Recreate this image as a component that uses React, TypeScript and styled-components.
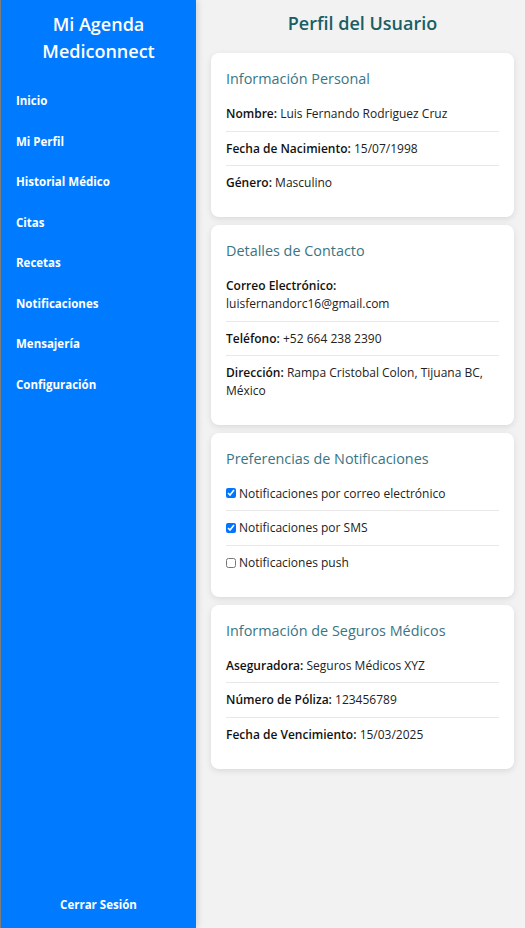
import styled, { createGlobalStyle } from "styled-components";

const GlobalStyle = createGlobalStyle`
  html, body {
    margin: 0;
    padding: 0;
  }
  body {
    font-family: "Open Sans", "Noto Sans", sans-serif;
    background: #f2f2f2;
    color: #222;
  }
  * {
    box-sizing: border-box;
  }
`;

const Layout = styled.div`
  display: flex;
  height: 928px;
`;

const Sidebar = styled.aside`
  width: 196px;
  flex-shrink: 0;
  background: #007bff;
  border-left: 1px solid #7d7d7d;
  color: #fff;
  display: flex;
  flex-direction: column;
  box-shadow: 2px 0 6px rgba(0, 0, 0, 0.12);
  position: relative;
  z-index: 1;
`;

const Brand = styled.h1`
  margin: 11px 0 16px;
  font-size: 18px;
  font-weight: 600;
  line-height: 27px;
  text-align: center;
`;

const NavList = styled.ul`
  list-style: none;
  margin: 0;
  padding: 0;
`;

const NavItem = styled.li`
  padding: 11px 15px;
  font-size: 11.5px;
  font-weight: 700;
  line-height: 18.5px;
  cursor: pointer;
`;

const Logout = styled.div`
  margin-top: auto;
  padding: 16px 15px 14px;
  font-size: 11.5px;
  font-weight: 700;
  line-height: 18px;
  text-align: center;
  cursor: pointer;
`;

const Main = styled.main`
  flex: 1;
  padding: 10px 11px 15px 15px;
  overflow: auto;
`;

const PageTitle = styled.h2`
  margin: 0 0 16px;
  font-size: 18px;
  font-weight: 600;
  line-height: 27px;
  color: #1a5e63;
  text-align: center;
`;

const Card = styled.section`
  background: #fff;
  border-radius: 8px;
  padding: 15px 15px 17px;
  margin-bottom: 8px;
  box-shadow: 0 2px 6px rgba(0, 0, 0, 0.1);
`;

const CardTitle = styled.h3`
  margin: 0 0 7px;
  font-size: 14.4px;
  font-weight: 400;
  line-height: 22px;
  color: #3a7584;
`;

const Row = styled.div`
  padding: 8px 0;
  font-size: 12px;
  line-height: 17.7px;
  border-bottom: 1px solid #e8e8e8;

  &:last-child {
    border-bottom: none;
  }
`;

const Label = styled.strong`
  font-weight: 600;
  color: #111;
`;

const CheckRow = styled.label`
  display: flex;
  align-items: center;
  padding: 8px 0;
  font-size: 12px;
  line-height: 17.7px;
  border-bottom: 1px solid #e8e8e8;

  &:last-child {
    border-bottom: none;
  }
`;

const Check = styled.input`
  width: 10px;
  height: 10px;
  margin: 0 3px 0 0;
`;

const navItems = [
  "Inicio",
  "Mi Perfil",
  "Historial Médico",
  "Citas",
  "Recetas",
  "Notificaciones",
  "Mensajería",
  "Configuración",
];

type TField = { label: string; value: string };

const InfoCard = ({ title, fields }: { title: string; fields: TField[] }) => (
  <Card>
    <CardTitle>{title}</CardTitle>
    {fields.map((f) => (
      <Row key={f.label}>
        <Label>{f.label}:</Label> {f.value}
      </Row>
    ))}
  </Card>
);

const App = () => {
  return (
    <>
      <GlobalStyle />
      <Layout>
        <Sidebar>
          <Brand>
            Mi Agenda
            <br />
            Mediconnect
          </Brand>
          <NavList>
            {navItems.map((item) => (
              <NavItem key={item}>{item}</NavItem>
            ))}
          </NavList>
          <Logout>Cerrar Sesión</Logout>
        </Sidebar>
        <Main>
          <PageTitle>Perfil del Usuario</PageTitle>
          <InfoCard
            title="Información Personal"
            fields={[
              { label: "Nombre", value: "Luis Fernando Rodriguez Cruz" },
              { label: "Fecha de Nacimiento", value: "15/07/1998" },
              { label: "Género", value: "Masculino" },
            ]}
          />
          <InfoCard
            title="Detalles de Contacto"
            fields={[
              { label: "Correo Electrónico", value: "luisfernandorc16@gmail.com" },
              { label: "Teléfono", value: "+52 664 238 2390" },
              { label: "Dirección", value: "Rampa Cristobal Colon, Tijuana BC, México" },
            ]}
          />
          <Card>
            <CardTitle>Preferencias de Notificaciones</CardTitle>
            <CheckRow>
              <Check type="checkbox" defaultChecked />
              Notificaciones por correo electrónico
            </CheckRow>
            <CheckRow>
              <Check type="checkbox" defaultChecked />
              Notificaciones por SMS
            </CheckRow>
            <CheckRow>
              <Check type="checkbox" />
              Notificaciones push
            </CheckRow>
          </Card>
          <InfoCard
            title="Información de Seguros Médicos"
            fields={[
              { label: "Aseguradora", value: "Seguros Médicos XYZ" },
              { label: "Número de Póliza", value: "123456789" },
              { label: "Fecha de Vencimiento", value: "15/03/2025" },
            ]}
          />
        </Main>
      </Layout>
    </>
  );
};

export default App;
